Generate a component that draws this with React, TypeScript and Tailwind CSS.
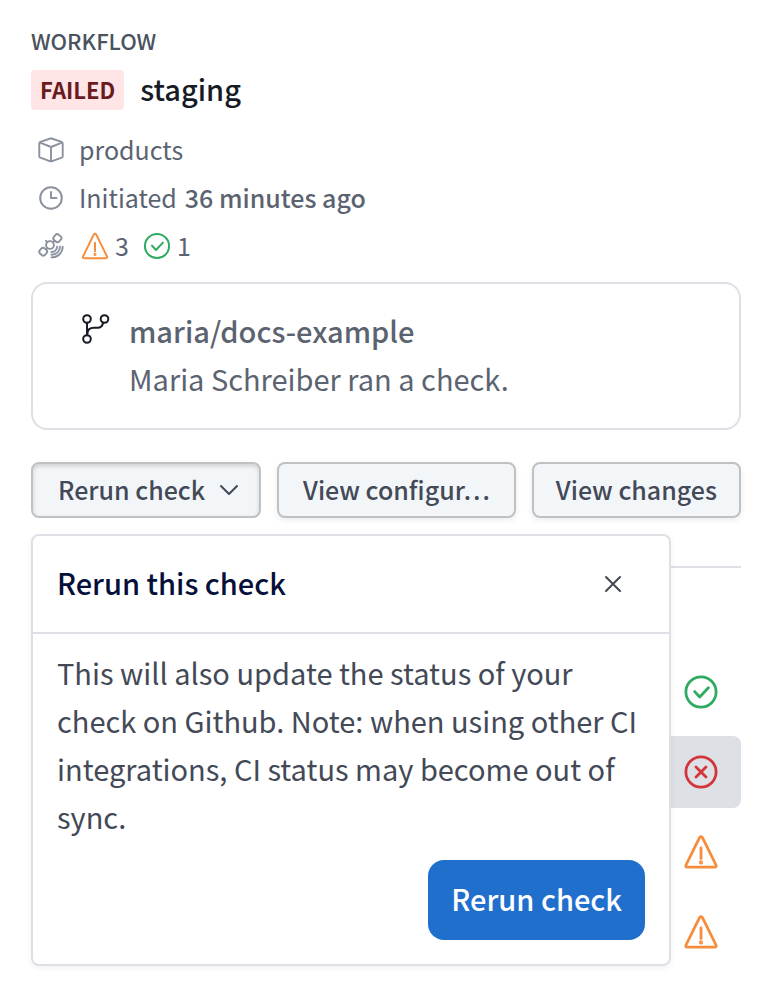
import type { ReactNode } from "react";

type Status = "passed" | "failed" | "warning";

function Glyph({
  box,
  className,
  stroke,
  children,
}: {
  box: number;
  className: string;
  stroke: number;
  children: ReactNode;
}) {
  return (
    <svg
      viewBox={`0 0 ${box} ${box}`}
      className={`block shrink-0 ${className}`}
      fill="none"
      stroke="currentColor"
      strokeWidth={stroke}
      strokeLinecap="round"
      strokeLinejoin="round"
      aria-hidden="true"
    >
      {children}
    </svg>
  );
}

function StatusIcon({ status, className, stroke }: { status: Status; className: string; stroke: number }) {
  if (status === "warning") {
    return (
      <Glyph box={40} className={className} stroke={stroke}>
        <path d="M18.4 5.8 5 33c-.5 1.200 0 2.200 1.200 2.200h27.600c1.200 0 1.700-1 1.200-2.200L21.600 5.800c-.7-1.400-2.500-1.400-3.200 0Z" />
        <path d="M20 16v10.500" />
        <circle cx="20" cy="30.400" r=".7" fill="currentColor" />
      </Glyph>
    );
  }
  return (
    <Glyph box={40} className={className} stroke={stroke}>
      <circle cx="20" cy="20" r="15.100" />
      {status === "passed" ? (
        <path d="m13.700 19.600 5 5.400 8.700-9.200" />
      ) : (
        <path d="m15 15 10 10M25 15 15 25" />
      )}
    </Glyph>
  );
}

function BoxIcon() {
  return (
    <Glyph box={28} className="size-7" stroke={1.9}>
      <path d="M13.400 2.500Q14 2.300 14.600 2.500L24.600 5.800Q25.700 6.200 25.700 7.400V20.200Q25.700 21.300 24.700 21.700L14.600 25.300Q14 25.500 13.400 25.300L3.300 21.700Q2.300 21.300 2.300 20.200V7.400Q2.300 6.200 3.400 5.800Z" />
      <path d="m3 6.600 11 4.400 11-4.400M14 11v14" />
    </Glyph>
  );
}

function ClockIcon() {
  return (
    <Glyph box={28} className="size-7" stroke={2}>
      <circle cx="14" cy="14" r="10.800" />
      <path d="M14 8v6h5.500" />
    </Glyph>
  );
}

function SatelliteIcon() {
  return (
    <Glyph box={28} className="size-7" stroke={1.9}>
      <rect x="2.700" y="16.200" width="7" height="7" rx="2.600" transform="rotate(40 6.200 19.700)" />
      <rect x="16.900" y="2.700" width="7" height="7" rx="2.200" transform="rotate(40 20.400 6.200)" />
      <circle cx="13" cy="13" r="3.900" />
      <path d="m9 16.800 1-1M16 10.200l1.400-1.400M9 8.800l1.300 1.400" />
      <path d="M14.400 20c3.200 0 5.400-2 5.600-5.200" />
      <path d="M14.400 22.700c4.900 0 8.200-3.200 8.500-7.900" />
      <path d="M14.400 25.400c6.300 0 11-4.300 11.300-10.600" />
    </Glyph>
  );
}

function BranchIcon() {
  return (
    <Glyph box={32} className="size-8" stroke={2}>
      <circle cx="8" cy="7" r="3.800" />
      <circle cx="25.500" cy="7" r="3.800" />
      <circle cx="8" cy="27" r="3.800" />
      <path d="M8 10.800v12.400M8.400 22c0-4 2.600-6.200 6.600-6.200h3.500c3.200 0 5-1.800 5.600-5" />
    </Glyph>
  );
}

const checks: Status[] = ["passed", "failed", "warning", "warning"];

const secondary =
  "flex h-14 items-center rounded-lg border-2 border-[#bfc2c5] bg-[#f2f6f9] pb-0.5 text-[25px] leading-10 font-medium whitespace-nowrap text-[#434956]";

export default function App() {
  return (
    <main className="min-h-screen bg-white pt-6 pr-8 pb-4 pl-[31px] font-['Noto_Sans_CJK_KR','Noto_Sans',sans-serif] text-[#5b6371]">
      <header>
        <p className="text-[22px] leading-8 font-medium text-[#4b5260]">WORKFLOW</p>
        <div className="mt-[14px] flex items-center gap-4">
          <span className="flex h-10 items-center rounded bg-[#ffe5e5] px-[9px] pb-0.5 text-[22px] leading-8 font-bold text-[#691b1f]">
            FAILED
          </span>
          <h1 className="pb-1 text-[29px] leading-9 font-medium text-[#171b26]">staging</h1>
        </div>
      </header>

      <ul className="mt-[15px] mb-[13px] pl-[6px] text-[25px] leading-[48px]">
        <li className="flex h-12 items-center gap-[14px]">
          <span className="pt-0.5 text-[#8a929e]"><BoxIcon /></span>
          products
        </li>
        <li className="flex h-12 items-center gap-[14px]">
          <span className="pt-0.5 text-[#8a929e]"><ClockIcon /></span>
          <span className="flex gap-2">
            Initiated <strong className="font-medium">36 minutes ago</strong>
          </span>
        </li>
        <li className="flex h-12 items-center">
          <span className="pt-0.5 text-[#8a929e]"><SatelliteIcon /></span>
          <span className="ml-[14px] flex items-center gap-1">
            <span className="pt-0.5 text-[#f68d3c]"><StatusIcon status="warning" className="size-8" stroke={2.5} /></span>
            3
          </span>
          <span className="ml-3 flex items-center gap-1">
            <span className="pt-0.5 text-[#2fab61]"><StatusIcon status="passed" className="size-8" stroke={2.5} /></span>
            1
          </span>
        </li>
      </ul>

      <section className="flex gap-[18px] rounded-2xl border-2 border-[#dde1e6] pt-[22px] pr-6 pb-[26px] pl-[46px] text-[29px] leading-[48px]">
        <span className="mt-[6px] text-[#171b26]"><BranchIcon /></span>
        <div className="min-w-0">
          <h2 className="font-medium">maria/docs-example</h2>
          <p>Maria Schreiber ran a check.</p>
        </div>
      </section>

      <div className="relative mt-8">
        <div className="flex gap-4">
          <button
            type="button"
            aria-expanded="true"
            className={`${secondary} shrink-0 gap-[14px] pr-5 pl-[25px] shadow-[inset_0_2px_4px_rgba(0,0,0,0.16)]`}
          >
            Rerun check
            <Glyph box={20} className="size-5" stroke={2}>
              <path d="m2 7 8 8 8-8" />
            </Glyph>
          </button>
          <button
            type="button"
            title="View configuration"
            className={`${secondary} min-w-0 flex-1 justify-center px-4 shadow-[0_2px_6px_rgba(0,0,0,0.08)]`}
          >
            View configur…
          </button>
          <button type="button" className={`${secondary} shrink-0 px-[22px] shadow-[0_2px_6px_rgba(0,0,0,0.08)]`}>
            View changes
          </button>
        </div>

        <div
          role="dialog"
          aria-labelledby="rerun-title"
          className="absolute top-full right-[70px] left-0 mt-4 rounded-lg border-2 border-[#dde1e6] bg-white shadow-[0_2px_6px_rgba(0,0,0,0.06)]"
        >
          <div className="flex h-[98px] items-center justify-between border-b-2 border-[#dde1e6] pr-11 pl-6">
            <h2 id="rerun-title" className="pb-1 text-[29px] leading-[48px] font-medium text-[#05103a]">
              Rerun this check
            </h2>
            <button type="button" aria-label="Close" className="text-[#434956]">
              <Glyph box={24} className="size-6" stroke={2}>
                <path d="m5 5 14 14M19 5 5 19" />
              </Glyph>
            </button>
          </div>
          <div className="px-6 pt-[14px] pb-6">
            <p className="text-[29px] leading-[48px] text-[#434956]">
              This will also update the status of your check on Github. Note: when using other CI integrations, CI
              status may become out of sync.
            </p>
            <button
              type="button"
              className="mt-5 ml-auto flex h-20 items-center rounded-2xl bg-[#216fcd] px-[23px] pb-1 text-[29px] leading-[48px] font-medium text-white"
            >
              Rerun check
            </button>
          </div>
        </div>
      </div>

      <ul className="mt-12 flex flex-col gap-2 border-t-2 border-[#dde1e6] pt-[88px]">
        {checks.map((status, index) => (
          <li
            key={index}
            className={`flex h-[72px] items-center justify-end rounded-lg pr-5 ${status === "failed" ? "bg-[#dde1e6]" : ""}`}
          >
            <span
              className={
                status === "passed" ? "text-[#2fab61]" : status === "failed" ? "text-[#d3353a]" : "text-[#f68d3c]"
              }
            >
              <StatusIcon status={status} className="size-10" stroke={2.8} />
            </span>
          </li>
        ))}
      </ul>
    </main>
  );
}
